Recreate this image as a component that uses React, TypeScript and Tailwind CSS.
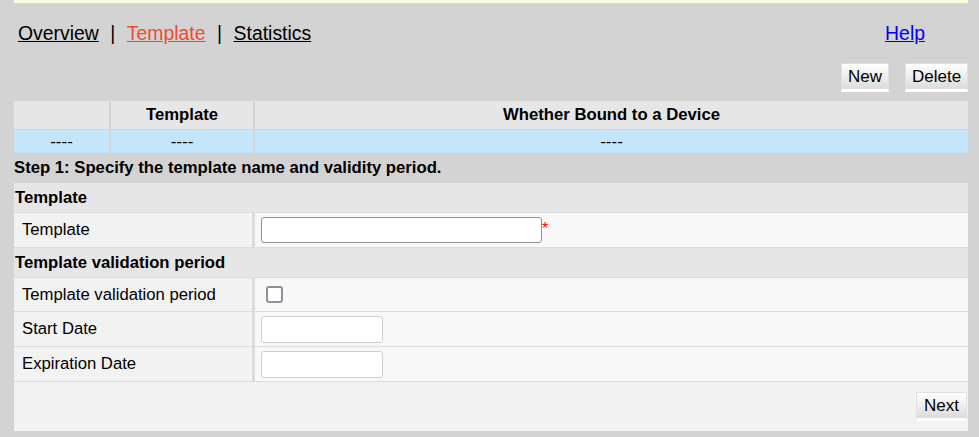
import React from "react";

const btn =
  "h-[29px] px-[6px] text-[17px] text-black border border-[#e0e0e0] border-b-[3px] border-b-white bg-gradient-to-b from-white to-[#dcdcdc] leading-none";

export default function App() {
  return (
    <div className="min-h-[437px] w-[979px] bg-[#d3d3d3] font-['Liberation_Sans',Arial,sans-serif] text-black">
      <div className="ml-[14px] w-[954px]">
        <div className="h-[3px] bg-[#ffffe0]" />
        <div className="flex h-[60px] items-center justify-between pl-[4px] pr-[43px] pt-[1px] text-[19.4px]">
          <div className="flex items-center">
            <a className="underline text-black">Overview</a>
            <span className="mx-[11.5px]">|</span>
            <a className="underline text-[#f04a33]">Template</a>
            <span className="mx-[11.5px]">|</span>
            <a className="underline text-black">Statistics</a>
          </div>
          <a className="underline text-[#0000ee]">Help</a>
        </div>
        <div className="flex justify-end gap-[16px]">
          <button className={btn + " w-[48px]"}>New</button>
          <button className={btn + " w-[63px]"}>Delete</button>
        </div>
        <div className="mt-[9px] flex flex-col gap-[1px]">
          <div className="flex h-[28px] gap-[2px] text-[16.7px] font-bold">
            <div className="w-[95px] bg-[#e6e6e6]" />
            <div className="flex w-[142px] items-center justify-center bg-[#e6e6e6]">Template</div>
            <div className="flex flex-1 items-center justify-center bg-[#e6e6e6]">Whether Bound to a Device</div>
          </div>
          <div className="flex h-[23px] gap-[2px] text-[17px]">
            <div className="flex w-[95px] items-center justify-center bg-[#c5e5fb]">----</div>
            <div className="flex w-[142px] items-center justify-center bg-[#c5e5fb]">----</div>
            <div className="flex flex-1 items-center justify-center bg-[#c5e5fb]">----</div>
          </div>
        </div>
        <div className="flex h-[30px] items-center text-[16.7px] font-bold">
          Step 1: Specify the template name and validity period.
        </div>
        <div className="flex flex-col text-[16.7px]">
          <div className="flex h-[29px] items-center bg-[#e6e6e6] pl-[1px] font-bold">Template</div>
          <div className="flex h-[35px] border-t border-[#dcdcdc]">
            <div className="flex w-[238px] items-center bg-[#f2f2f2] pl-[8px]">Template</div>
            <div className="w-[3px] bg-[#dcdcdc]" />
            <div className="flex flex-1 items-start bg-[#f8f8f8] pl-[6px] pt-[4px]">
              <input className="h-[26px] w-[281px] rounded-[3px] border border-[#8f8f9d] bg-white" />
              <span className="pt-[4px] text-[16px] leading-none text-[#ff0000]">*</span>
            </div>
          </div>
          <div className="flex h-[30px] items-center border-t border-[#dcdcdc] bg-[#e6e6e6] pl-[1px] font-bold">
            Template validation period
          </div>
          <div className="flex h-[34px] border-t border-[#dcdcdc]">
            <div className="flex w-[238px] items-center bg-[#f2f2f2] pl-[8px]">Template validation period</div>
            <div className="w-[3px] bg-[#dcdcdc]" />
            <div className="flex flex-1 items-center bg-[#f8f8f8] pl-[11px]">
              <span className="block h-[17px] w-[17px] rounded-[3px] border-2 border-[#8f8f9d] bg-white" />
            </div>
          </div>
          <div className="flex h-[35px] border-t border-[#dcdcdc]">
            <div className="flex w-[238px] items-center bg-[#f2f2f2] pl-[8px]">Start Date</div>
            <div className="w-[3px] bg-[#dcdcdc]" />
            <div className="flex flex-1 items-center bg-[#f8f8f8] pl-[6px]">
              <input className="h-[27px] w-[122px] rounded-[3px] border border-[#d0d0d0] bg-white" />
            </div>
          </div>
          <div className="flex h-[35px] border-t border-[#dcdcdc]">
            <div className="flex w-[238px] items-center bg-[#f2f2f2] pl-[8px]">Expiration Date</div>
            <div className="w-[3px] bg-[#dcdcdc]" />
            <div className="flex flex-1 items-center bg-[#f8f8f8] pl-[6px]">
              <input className="h-[27px] w-[122px] rounded-[3px] border border-[#d0d0d0] bg-white" />
            </div>
          </div>
          <div className="flex h-[50px] items-start justify-end border-t border-[#dcdcdc] bg-[#f2f2f2] pr-[1px] pt-[10px]">
            <button className={btn + " w-[51px]"}>Next</button>
          </div>
        </div>
      </div>
    </div>
  );
}
